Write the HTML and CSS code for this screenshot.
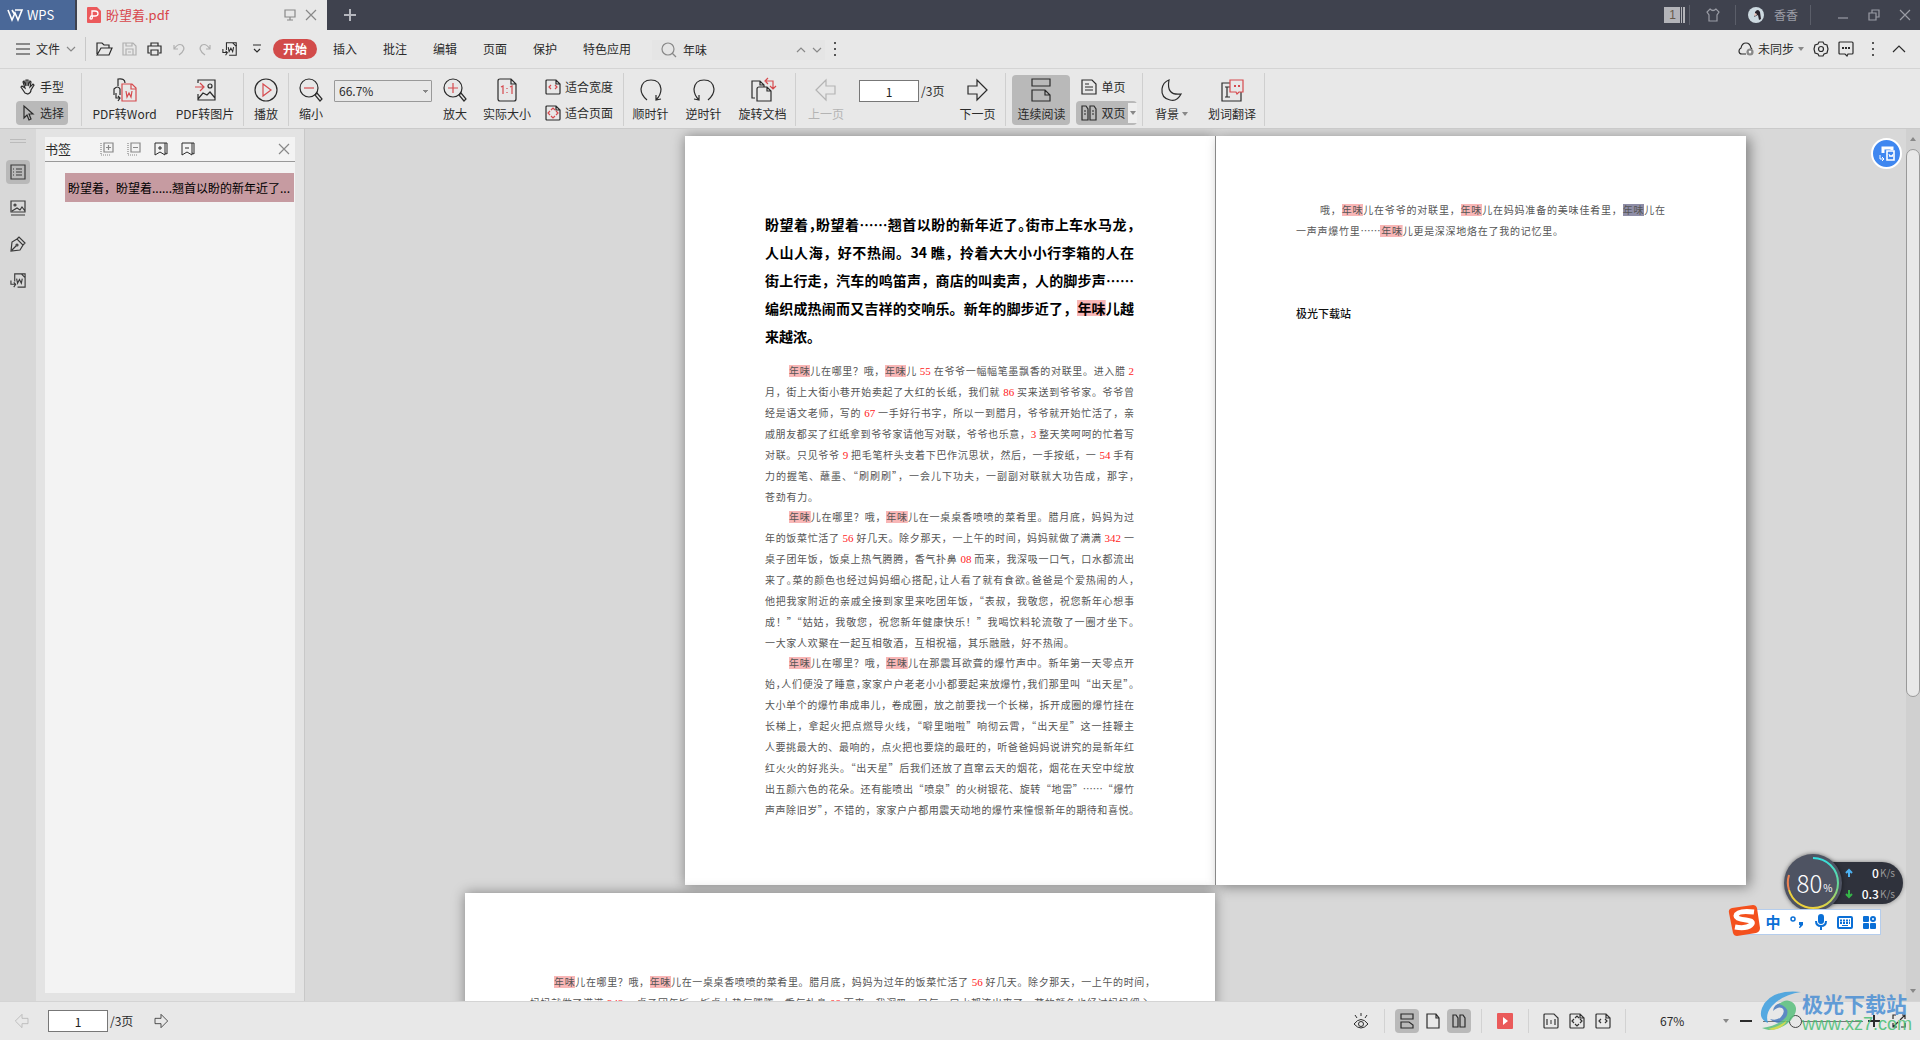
FILE: index.html
```html
<!DOCTYPE html>
<html lang="zh-CN">
<head>
<meta charset="utf-8">
<title>盼望着.pdf - WPS</title>
<link rel="stylesheet" href="styles.css">
</head>
<body>
<svg class="sprite" aria-hidden="true">
  <symbol id="down" viewBox="0 0 10 10"><path d="M1 3l4 4 4-4"/></symbol>
  <symbol id="up" viewBox="0 0 10 10"><path d="M1 7l4-4 4 4"/></symbol>
  <symbol id="close" viewBox="0 0 12 12"><path d="M1 1l10 10M11 1L1 11"/></symbol>
  <symbol id="left" viewBox="0 0 24 24"><path d="M2 12L12 2v6h9v8h-9v6z"/></symbol>
  <symbol id="right" viewBox="0 0 24 24"><path d="M22 12L12 2v6H3v8h9v6z"/></symbol>
  <symbol id="export" viewBox="0 0 18 18"><path d="M5 10V2h11v14H8M12 2l4 4M1 9v4h5M4 11l2 2-2 3M7 7l1 5 2-4 2 4 1-5"/></symbol>
  <symbol id="one" viewBox="0 0 20 24"><path d="M1 3q0-2 2-2h11l5 5v15q0 2-2 2H3q-2 0-2-2zM14 1v5h5"/><path class="red" d="M4 9l2-1v8M13 9l2-1v8M10 10v1M10 14v1"/></symbol>
  <symbol id="fitw" viewBox="0 0 16 16"><path d="M1 2q0-1 1-1h9l4 4v9q0 1-1 1H2q-1 0-1-1zM11 1v4h4"/><path class="red" d="M6 6L4 8l2 2M10 6l2 2-2 2"/></symbol>
  <symbol id="fitp" viewBox="0 0 16 16"><path d="M1 2q0-1 1-1h9l4 4v9q0 1-1 1H2q-1 0-1-1zM11 1v4h4"/><path class="red" d="M6 5l2-2 2 2M6 11l2 2 2-2M5 6L3 8l2 2M11 6l2 2-2 2"/></symbol>
  <symbol id="cont" viewBox="0 0 20 24"><path d="M1 1h18v7H1zM1 23V12h13l5 5v6zM14 12v5h5"/></symbol>
  <symbol id="two" viewBox="0 0 16 16"><path d="M1 1h4l2 3v11H1zM9 1h4l2 3v11H9zM3 6h2M3 9h2M11 6h2M11 9h2"/></symbol>
  <symbol id="lens" viewBox="0 0 24 24"><circle cx="10" cy="10" r="9"/><path d="M16 17l2-2 5 6-2 2z"/></symbol>
  <symbol id="mark" viewBox="0 0 14 14"><path d="M1 1h10v12l-5-3-5 3zM11 1h2v11l-2-1"/></symbol>
</svg>

<header class="titlebar">
  <button class="wps"><svg class="i" width="16" height="12" viewBox="0 0 16 12"><path d="M1 1l4 10 3-7 3 7 4-10H8M5 1l3 5" stroke-width="1.6"/></svg>WPS</button>
  <div class="doctab">
    <svg width="14" height="16" viewBox="0 0 14 16"><path d="M1 0h9l4 4v11q0 1-1 1H1q-1 0-1-1V1q0-1 1-1z" fill="#ec5a5c"/><path d="M5 9V4h3q3 0 3 2.500T8 9H4q-2 3 0 3 2 0 1-3" fill="none" stroke="#fff" stroke-width="1.300"/></svg>
    <span class="docname">盼望着.pdf</span>
    <svg class="i dim" width="12" height="12" viewBox="0 0 12 12"><path d="M1 1h10v7H1zM6 8v3M3 11h6"/></svg>
    <button aria-label="关闭标签"><svg class="i dim" width="12" height="12"><use href="#close"/></svg></button>
  </div>
  <button class="newtab" aria-label="新建"><svg class="i" width="12" height="12" viewBox="0 0 12 12"><path d="M6 0v12M0 6h12" stroke-width="2"/></svg></button>
  <div class="winarea">
    <span class="count">1</span>
    <span class="tsep"></span>
    <button class="shirt" aria-label="皮肤"><svg class="i" width="14" height="14" viewBox="0 0 14 14"><path d="M4 1q3 3 6 0l3 3-2 3v6H3V7L1 4z"/></svg></button>
    <span class="tsep"></span>
    <button class="user"><svg width="16" height="16" viewBox="0 0 16 16"><circle cx="8" cy="8" r="8" fill="#cdd9e0"/><path d="M7 5q3-4 5 0l1 7-2 1-1-5-4 2 1-2z" fill="#29232c"/><path d="M7 6l2 1-1 2-2-1z" fill="#e8c4bb"/></svg>香香</button>
    <span class="tsep"></span>
    <button class="win" aria-label="最小化"><svg class="i" width="12" height="12" viewBox="0 0 12 12"><path d="M1 9h10"/></svg></button>
    <button class="win" aria-label="还原"><svg class="i" width="12" height="12" viewBox="0 0 12 12"><path d="M1 4h7v7H1zM4 4V1h7v7H8"/></svg></button>
    <button class="win" aria-label="关闭"><svg class="i" width="12" height="12"><use href="#close"/></svg></button>
  </div>
</header>

<nav class="menubar">
  <button class="file"><svg class="i" width="14" height="12" viewBox="0 0 14 12"><path d="M0 1h14M0 6h14M0 11h14"/></svg>文件<svg class="i dim" width="10" height="10"><use href="#down"/></svg></button>
  <span class="msep"></span>
  <div class="quick">
    <button aria-label="打开"><svg class="i" width="17" height="14" viewBox="0 0 17 14"><path d="M1 12V1h5l2 2h5v3M1 13l4-7h11l-3 7z"/></svg></button>
    <button aria-label="保存"><svg class="i faint" width="15" height="14" viewBox="0 0 15 14"><path d="M1 1h10l3 3v9H1zM4 1v3h6V1M4 13V7h7v6M6 10h3"/></svg></button>
    <button aria-label="打印"><svg class="i" width="15" height="14" viewBox="0 0 15 14"><path d="M4 4V1h7v3M3 11H1V4h13v7h-2M4 8h7v5H4z"/></svg></button>
    <button aria-label="撤销"><svg class="i faint" width="13" height="14" viewBox="0 0 13 14"><path d="M1 3v4h4M1 7q4-6 8-4 5 4-3 10"/></svg></button>
    <button aria-label="重做"><svg class="i faint" width="13" height="14" viewBox="0 0 13 14"><path d="M12 3v4H8M12 7Q8 1 4 3q-5 4 3 10"/></svg></button>
    <button aria-label="转换为Word"><svg class="i" width="16" height="16"><use href="#export"/></svg></button>
    <button aria-label="自定义"><svg class="i" width="10" height="10" viewBox="0 0 10 10"><path d="M1 1h8M2 5l3 3 3-3"/></svg></button>
  </div>
  <div class="tabs">
    <button class="active">开始</button><button>插入</button><button>批注</button><button>编辑</button><button>页面</button><button>保护</button><button>特色应用</button>
  </div>
  <div class="search">
    <svg class="i dim" width="16" height="16" viewBox="0 0 16 16"><circle cx="7" cy="7" r="6"/><path d="M11 11l4 4"/></svg>
    <input type="text" value="年味" aria-label="查找">
    <button aria-label="上一个"><svg class="i dim" width="10" height="10"><use href="#up"/></svg></button>
    <button aria-label="下一个"><svg class="i dim" width="10" height="10"><use href="#down"/></svg></button>
  </div>
  <button class="dots" aria-label="更多"><i></i><i></i><i></i></button>
  <div class="menuright">
    <button class="sync"><svg class="i" width="16" height="14" viewBox="0 0 16 14"><path d="M8 12H4q-3 0-3-3 0-2 2-3Q4 1 8 1t5 5l1 1"/><circle cx="12" cy="10" r="3" fill="#888" stroke="#888"/><path d="M11 9l2 2M13 9l-2 2" stroke="#fff"/></svg>未同步<span class="tri"></span></button>
    <button aria-label="设置"><svg class="i" width="16" height="16" viewBox="0 0 16 16"><path d="M6 1h4l1 2 3 1 1 4-1 4-3 1-1 2H6l-1-2-3-1-1-4 1-4 3-1z"/><circle cx="8" cy="8" r="2.500"/></svg></button>
    <button aria-label="反馈"><svg class="i" width="16" height="16" viewBox="0 0 16 16"><path d="M1 2q0-1 1-1h12q1 0 1 1v10q0 1-1 1h-4l-1 2-2-2H2q-1 0-1-1z"/><path d="M4 7h2M7 7h2M10 7h2" stroke-width="2"/></svg></button>
    <button class="dots" aria-label="更多选项"><i></i><i></i><i></i></button>
    <button aria-label="收起功能区"><svg class="i" width="14" height="14" viewBox="0 0 14 14"><path d="M1 10l6-6 6 6"/></svg></button>
  </div>
</nav>

<section class="toolbar">
  <div class="pair mode">
    <button><svg class="i" width="16" height="16" viewBox="0 0 16 16"><path d="M5 14L1 8l1-1 3 2-2-6 1-1 2 5V1h2v6l2-5 1 1-1 5 3-3 1 1-3 5q0 3-3 4z"/></svg>手型</button>
    <button class="on"><svg class="i" width="16" height="16" viewBox="0 0 16 16"><path d="M4 1v12l3-3 2 5 2-1-2-5h4z"/></svg>选择</button>
  </div>
  <span class="sep"></span>
  <button class="tool w84"><svg class="i" width="24" height="24" viewBox="0 0 24 24"><path d="M5 8V1q7-1 7 4M1 17v-6q4-4 6 0v6M3 15v5h4M5 18l2 2-2 3"/><path class="red" d="M9 6h10l4 4v13H9zM18 6v5h5M13 13l1 6 2-4 2 4 1-6"/></svg>PDF转Word</button>
  <button class="tool w76"><svg class="i" width="24" height="24" viewBox="0 0 24 24"><path d="M5 5V2h17v20H5v-6M5 21l5-6 4 2 3-3 5 6"/><circle cx="17" cy="8" r="2"/><path class="red" d="M2 9h8M7 5l4 4-4 4"/></svg>PDF转图片</button>
  <span class="sep"></span>
  <button class="tool w44"><svg class="i" width="24" height="24" viewBox="0 0 24 24"><circle cx="12" cy="12" r="11"/><path class="red" d="M9 6l8 6-8 6z"/></svg>播放</button>
  <span class="sep"></span>
  <button class="tool w44"><svg class="i" width="24" height="24" viewBox="0 0 24 24"><use href="#lens" width="24" height="24"/><path class="red" d="M5 10h10"/></svg>缩小</button>
  <select class="zoomsel" aria-label="缩放比例"><option>66.7%</option></select>
  <button class="tool w44"><svg class="i" width="24" height="24" viewBox="0 0 24 24"><use href="#lens" width="24" height="24"/><path class="red" d="M5 10h10M10 5v10"/></svg>放大</button>
  <button class="tool w60"><svg class="i" width="20" height="24"><use href="#one"/></svg>实际大小</button>
  <div class="pair fit">
    <button><svg class="i" width="16" height="16"><use href="#fitw"/></svg>适合宽度</button>
    <button><svg class="i" width="16" height="16"><use href="#fitp"/></svg>适合页面</button>
  </div>
  <span class="sep"></span>
  <button class="tool w52"><svg class="i" width="24" height="24" viewBox="0 0 24 24"><path d="M8 22Q2 17 2 11 3 2 12 2t10 9q0 6-5 11M22 21l-5 1 0-5"/></svg>顺时针</button>
  <button class="tool w52"><svg class="i" width="24" height="24" viewBox="0 0 24 24"><path d="M16 22q6-5 6-11-1-9-10-9T2 11q0 6 5 11M2 21l5 1V17"/></svg>逆时针</button>
  <button class="tool w64"><svg class="i" width="26" height="24" viewBox="0 0 26 24"><path d="M5 20H2V3h8l4 4v2M10 3v4h4M7 23V11q0-2 2-2h8l4 4v10zM17 9v4h4"/><path class="red" d="M16 3h7v7M18 0l-3 3 3 3M20 8l3 3 3-3"/></svg>旋转文档</button>
  <span class="sep"></span>
  <button class="tool w56 off" disabled><svg class="i" width="24" height="24"><use href="#left"/></svg>上一页</button>
  <div class="pageno"><input type="text" value="1" aria-label="页码"><span>/3页</span></div>
  <button class="tool w56"><svg class="i" width="24" height="24"><use href="#right"/></svg>下一页</button>
  <span class="sep"></span>
  <button class="tool w58 on"><svg class="i" width="20" height="24"><use href="#cont"/></svg>连续阅读</button>
  <div class="pair view">
    <button><svg class="i" width="16" height="16" viewBox="0 0 16 16"><path d="M1 1h10l4 4v10H1zM4 5h4M4 8h8M4 11h8"/></svg>单页</button>
    <button class="on"><svg class="i" width="16" height="16"><use href="#two"/></svg>双页<span class="drop"><span class="tri"></span></span></button>
  </div>
  <span class="sep"></span>
  <button class="tool w56"><svg class="i" width="24" height="24" viewBox="0 0 24 24"><path d="M10 2Q7 18 22 16 18 24 11 22 2 20 3 11 4 4 10 2z"/></svg><span class="lab">背景<span class="tri"></span></span></button>
  <button class="tool w64"><svg class="i" width="24" height="24" viewBox="0 0 24 24"><path d="M10 5H2v18h19v-9M5 9h5M5 19h5M7 9v10"/><path class="red" d="M10 2h13v12h-4l-2 2-1-2h-6z"/><path class="red" d="M14 8h2M18 8h2" stroke-width="2"/></svg>划词翻译</button>
  <span class="sep"></span>
</section>

<main class="work">
  <aside class="rail">
    <span class="grip"></span>
    <button class="on" aria-label="书签"><svg class="i" width="16" height="16" viewBox="0 0 16 16"><path d="M1 1h14v14H1zM6 5h6M6 8h6M6 11h6M3 5h1M3 8h1M3 11h1"/></svg></button>
    <button aria-label="缩略图"><svg class="i" width="16" height="16" viewBox="0 0 16 16"><path d="M1 1h14v11H1zM1 15h14M2 11l5-3 3 2 2-3 3 4"/><circle cx="5" cy="5" r="1"/></svg></button>
    <button aria-label="签名"><svg class="i" width="16" height="16" viewBox="0 0 16 16"><path d="M1 15l1-9 5-3 6 6-3 5zM7 3l2-2 6 6-2 2M2 14l4-4"/><circle cx="7" cy="9" r="1"/></svg></button>
    <button aria-label="转换"><svg class="i" width="17" height="17"><use href="#export"/></svg></button>
  </aside>
  <section class="side">
    <div class="panel">
      <div class="panelhead">
        <h2>书签</h2>
        <button aria-label="展开"><svg class="i dim" width="14" height="14" viewBox="0 0 14 14"><path d="M4 1h9v9H4zM8.500 3v5M6 5.500h5"/><path d="M1 1v12h9" stroke-dasharray="1 1"/></svg></button>
        <button aria-label="折叠"><svg class="i dim" width="14" height="14" viewBox="0 0 14 14"><path d="M4 1h9v9H4zM6 5.500h5"/><path d="M1 1v12h9" stroke-dasharray="1 1"/></svg></button>
        <button aria-label="添加书签"><svg class="i thin" width="14" height="14" viewBox="0 0 14 14"><use href="#mark" width="14" height="14"/><path d="M4 6h4M6 4v4"/></svg></button>
        <button aria-label="删除书签"><svg class="i thin" width="14" height="14" viewBox="0 0 14 14"><use href="#mark" width="14" height="14"/><path d="M4 6h4"/></svg></button>
        <button class="x" aria-label="关闭面板"><svg class="i dim" width="12" height="12"><use href="#close"/></svg></button>
      </div>
      <a class="entry" href="#p1">盼望着，盼望着......翘首以盼的新年近了...</a>
    </div>
  </section>
  <div class="viewer">
    <div class="sheets">
      <article class="page" id="p1">
        <h1>
          <span class="l">盼望着<b>，</b>盼望着……翘首以盼的新年近了<b>。</b>街市上车水马龙<b>，</b></span>
          <span class="l">人山人海，好不热闹。34 瞧，拎着大大小小行李箱的人在</span>
          <span class="l">街上行走，汽车的鸣笛声，商店的叫卖声，人的脚步声……</span>
          <span class="l">编织成热闹而又吉祥的交响乐。新年的脚步近了，<mark>年味</mark>儿越</span>
          <span class="l end">来越浓。</span>
        </h1>
        <p>
          <span class="l in"><mark>年味</mark>儿在哪里？哦，<mark>年味</mark>儿 <em>55</em> 在爷爷一幅幅笔墨飘香的对联里。进入腊 <em>2</em></span>
          <span class="l">月，街上大街小巷开始卖起了大红的长纸，我们就 <em>86</em> 买来送到爷爷家。爷爷曾</span>
          <span class="l">经是语文老师，写的 <em>67</em> 一手好行书字，所以一到腊月，爷爷就开始忙活了，亲</span>
          <span class="l">戚朋友都买了红纸拿到爷爷家请他写对联，爷爷也乐意，<em>3</em> 整天笑呵呵的忙着写</span>
          <span class="l">对联。只见爷爷 <em>9</em> 把毛笔杆头支着下巴作沉思状，然后，一手按纸，一 <em>54</em> 手有</span>
          <span class="l">力的握笔、蘸墨、“刷刷刷”，一会儿下功夫，一副副对联就大功告成，那字<b>，</b></span>
          <span class="l s1">苍劲有力<b>。</b></span>
        </p>
        <p>
          <span class="l in"><mark>年味</mark>儿在哪里？哦，<mark>年味</mark>儿在一桌桌香喷喷的菜肴里。腊月底，妈妈为过</span>
          <span class="l">年的饭菜忙活了 <em>56</em> 好几天。除夕那天，一上午的时间，妈妈就做了满满 <em>342</em> 一</span>
          <span class="l">桌子团年饭，饭桌上热气腾腾，香气扑鼻 <em>08</em> 而来，我深吸一口气，口水都流出</span>
          <span class="l">来了<b>。</b>菜的颜色也经过妈妈细心搭配<b>，</b>让人看了就有食欲<b>。</b>爸爸是个爱热闹的人<b>，</b></span>
          <span class="l">他把我家附近的亲戚全接到家里来吃团年饭，“表叔，我敬您，祝您新年心想事</span>
          <span class="l">成！”“姑姑，我敬您，祝您新年健康快乐！”我喝饮料轮流敬了一圈才坐下<b>。</b></span>
          <span class="l s2">一大家人欢聚在一起互相敬酒，互相祝福，其乐融融，好不热闹<b>。</b></span>
        </p>
        <p>
          <span class="l in"><mark>年味</mark>儿在哪里？哦，<mark>年味</mark>儿在那震耳欲聋的爆竹声中。新年第一天零点开</span>
          <span class="l">始<b>，</b>人们便没了睡意<b>，</b>家家户户老老小小都要起来放爆竹<b>，</b>我们那里叫“出天星”<b>。</b></span>
          <span class="l">大小单个的爆竹串成串儿，卷成圈，放之前要找一个长梯，拆开成圈的爆竹挂在</span>
          <span class="l">长梯上，拿起火把点燃导火线，“噼里啪啦”响彻云霄，“出天星”这一挂鞭主</span>
          <span class="l">人要挑最大的、最响的，点火把也要烧的最旺的，听爸爸妈妈说讲究的是新年红</span>
          <span class="l">红火火的好兆头。“出天星”后我们还放了直窜云天的烟花，烟花在天空中绽放</span>
          <span class="l">出五颜六色的花朵。还有能喷出“喷泉”的火树银花、旋转“地雷”……“爆竹</span>
          <span class="l">声声除旧岁”，不错的，家家户户都用震天动地的爆竹来憧憬新年的期待和喜悦<b>。</b></span>
        </p>
      </article>
      <article class="page second">
        <p>
          <span class="l in">哦，<mark>年味</mark>儿在爷爷的对联里，<mark>年味</mark>儿在妈妈准备的美味佳肴里，<mark class="cur">年味</mark>儿在</span>
          <span class="l s3">一声声爆竹里……<mark>年味</mark>儿更是深深地烙在了我的记忆里<b>。</b></span>
        </p>
        <p class="sign">极光下载站</p>
      </article>
      <article class="page wide">
        <p>
          <span class="l in"><mark>年味</mark>儿在哪里？哦，<mark>年味</mark>儿在一桌桌香喷喷的菜肴里。腊月底，妈妈为过年的饭菜忙活了 <em>56</em> 好几天。除夕那天，一上午的时间<b>，</b></span>
          <span class="l">妈妈就做了满满 <em>342</em> 一桌子团年饭，饭桌上热气腾腾，香气扑鼻 <em>08</em> 而来，我深吸一口气，口水都流出来了。菜的颜色也经过妈妈细心</span>
        </p>
      </article>
    </div>
    <div class="scroll"><span class="tri upw"></span><span class="thumb"></span><span class="tri"></span></div>
    <button class="float" aria-label="PDF转Word"><svg width="18" height="18" viewBox="0 0 18 18" fill="none" stroke="#fff"><path d="M5 8V3h9v2" stroke-width="3"/><path d="M9 6h7v9H9z" stroke-width="1.600"/><path d="M11 9l1 3 1-2 1 2 1-3M2 10v4h4M4 12l2 2-2 2"/></svg></button>
  </div>
</main>

<footer class="status">
  <button class="off" aria-label="上一页"><svg class="i" width="16" height="16"><use href="#left"/></svg></button>
  <div class="pageno"><input type="text" value="1" aria-label="当前页"><span>/3页</span></div>
  <button class="next" aria-label="下一页"><svg class="i" width="16" height="16"><use href="#right"/></svg></button>
  <div class="statright">
    <button class="sb eye" aria-label="护眼"><svg class="i thin" width="18" height="18" viewBox="0 0 18 18"><path d="M2 12q7-9 14 0-7 8-14 0zM9 1v3M3 3l2 3M15 3l-2 3"/><circle cx="9" cy="12" r="2.500"/></svg></button>
    <span class="ssep"></span>
    <button class="sb on" aria-label="连续阅读"><svg class="i" width="16" height="16" viewBox="0 0 16 16"><path d="M2 1h12v5H2zM2 15V9h8l4 3v3z"/></svg></button>
    <button class="sb" aria-label="单页"><svg class="i" width="14" height="16" viewBox="0 0 14 16"><path d="M1 1h9l3 4v10H1zM10 1v4h3"/></svg></button>
    <button class="sb on" aria-label="双页"><svg class="i" width="16" height="16" viewBox="0 0 16 16"><path d="M2 2h3l2 3v9H2zM9 2h3l2 3v9H9z"/></svg></button>
    <span class="ssep"></span>
    <button class="sb play" aria-label="播放"><svg width="16" height="16" viewBox="0 0 16 16"><rect width="16" height="16" rx="1" fill="#ea5a5a"/><path d="M6 4l5 4-5 4z" fill="#fff"/></svg></button>
    <span class="ssep"></span>
    <div class="fits">
      <button class="sb mono" aria-label="实际大小"><svg class="i" width="16" height="16" viewBox="0 0 16 16"><path d="M1 2q0-1 1-1h9l4 4v9q0 1-1 1H2q-1 0-1-1zM4 6v6M12 6v6M7 8h2M7 10h2"/></svg></button>
      <button class="sb mono" aria-label="适合页面"><svg class="i" width="16" height="16"><use href="#fitp"/></svg></button>
      <button class="sb mono" aria-label="适合宽度"><svg class="i" width="16" height="16"><use href="#fitw"/></svg></button>
    </div>
    <span class="ssep"></span>
    <button class="pct">67%<span class="tri"></span></button>
    <button class="pm" aria-label="缩小"><svg class="i" width="12" height="12" viewBox="0 0 12 12"><path d="M0 6h12" stroke-width="2"/></svg></button>
    <input class="slider" type="range" min="0" max="100" value="30" aria-label="缩放">
    <button class="pm" aria-label="放大"><svg class="i" width="12" height="12" viewBox="0 0 12 12"><path d="M0 6h12M6 0v12" stroke-width="2"/></svg></button>
    <button class="full" aria-label="全屏"><svg class="i" width="14" height="14" viewBox="0 0 14 14"><path d="M1 5V1h3M10 1h3v4M13 9v4h-4M5 13H1V9M8 6l5-5M1 13l5-5"/></svg></button>
  </div>
</footer>

<div class="watermark">
  <svg width="44" height="40" viewBox="0 0 44 40"><path d="M43 2Q12-1 4 18q-4 11 6 15-3-9 4-17Q24 5 43 2z" fill="#3c9fe0"/><path d="M12 29q7 2 11-2 5-6 1-9-4-2-9 3 1-8 10-8 10 2 10 9-1 10-12 11-7 0-11-4z" fill="#4479be"/><path d="M21 14q7-6 13-2 7 5 2 14-8 13-25 14-5-1-7-2 18-3 24-11 5-9-7-13z" fill="#58bf7c"/><path d="M10 39q12-2 19-9-3 8-14 10z" fill="#cbd839"/></svg>
  <div><strong>极光下载站</strong><span>www.xz7.com</span></div>
</div>

<div class="meter">
  <div class="rates">
    <span><svg width="10" height="10" viewBox="0 0 10 10"><path d="M5 9V2M2 5l3-3 3 3" fill="none" stroke="#4db2f2" stroke-width="2"/></svg><b>0</b><small>K/s</small></span>
    <span><svg width="10" height="10" viewBox="0 0 10 10"><path d="M5 1v7M2 5l3 3 3-3" fill="none" stroke="#35b548" stroke-width="2"/></svg><b>0.3</b><small>K/s</small></span>
  </div>
  <div class="dial">
    <svg width="58" height="58" viewBox="0 0 58 58" fill="none" stroke-width="2"><defs><linearGradient id="g" x1="0" y1="0" x2="0" y2="1"><stop offset="0" stop-color="#35dfe0"/><stop offset=".6" stop-color="#6fd68c"/><stop offset="1" stop-color="#ecd23d"/></linearGradient></defs><path d="M29 4a25 25 0 0 1 0 50" stroke="url(#g)"/><path d="M29 54A25 25 0 0 1 5 36" stroke="#ecd23d"/><path d="M5 36A25 25 0 0 1 5 21" stroke="#ee8252"/></svg>
    <span>80<small>%</small></span>
  </div>
</div>

<div class="ime">
  <svg class="logo" width="32" height="32" viewBox="0 0 32 32"><path d="M4 3l21-3q3 0 4 3l3 20q0 4-4 5L9 31q-3 0-4-3L1 8q-1-4 3-5z" fill="#f4511e"/><path d="M26 7Q9 5 8 11q0 3 10 4 9 1 5 5-5 4-16 2" fill="none" stroke="#fff" stroke-width="5"/></svg>
  <button>中</button>
  <button aria-label="标点"><svg width="14" height="14" viewBox="0 0 14 14"><circle cx="3" cy="4" r="2" fill="none" stroke="#0a6fd6" stroke-width="1.500"/><path d="M9 7h4v3l-3 3H9l1-3H9z" fill="#0a6fd6"/></svg></button>
  <button aria-label="语音"><svg width="14" height="16" viewBox="0 0 14 16" fill="none" stroke="#0a6fd6" stroke-width="2"><path d="M2 7q0 5 5 5t5-5M7 12v4"/><rect x="5" y="1" width="4" height="8" rx="2" fill="#0a6fd6"/></svg></button>
  <button aria-label="键盘"><svg width="16" height="14" viewBox="0 0 16 14" fill="none" stroke="#0a6fd6" stroke-width="2"><rect x="1" y="2" width="14" height="11" rx="1"/><path d="M3 5.500h10M3 8h10" stroke-dasharray="2 1"/><path d="M5 10.500h6" stroke-width="1"/></svg></button>
  <button aria-label="工具箱"><svg width="14" height="14" viewBox="0 0 14 14" fill="#0a6fd6"><rect x="1" y="1" width="6" height="6" rx="1"/><rect x="1" y="8" width="6" height="6" rx="1"/><rect x="8" y="8" width="6" height="6" rx="1"/><circle cx="11" cy="4" r="2" fill="none" stroke="#0a6fd6" stroke-width="2"/></svg></button>
</div>
</body>
</html>
```
FILE: styles.css
```css
* { box-sizing: border-box; }
body {
  margin: 0;
  height: 100vh;
  display: flex;
  flex-direction: column;
  overflow: hidden;
  position: relative;
  font: 12px/16px "Noto Sans CJK SC", "Noto Sans", sans-serif;
  color: #2b2b2b;
  background: #e8e8e8;
}
button, input, select { font: inherit; color: inherit; margin: 0; padding: 0; }
button { border: 0; background: none; display: flex; align-items: center; justify-content: center; white-space: nowrap; flex: none; }
svg { flex: none; display: block; }
.sprite { position: absolute; width: 0; height: 0; }
.i { fill: none; stroke: currentColor; stroke-width: 1.2; overflow: visible; }
.thin { stroke-width: 1; }
.red { stroke: var(--accent, #d64a4e); }
.dim { color: #888; }
.faint { color: #b0b0b0; }
.off { color: #b4b4b4; }
.on { background: #b9b9b9; border-radius: 4px; }
.tri { width: 0; height: 0; border: 3px solid transparent; border-top: 4px solid #888; border-bottom: 0; }

/* Title bar */
.titlebar { display: flex; height: 30px; flex: none; background: #3f424e; color: #9a9ca5; }
.wps { width: 75px; gap: 4px; background: #4a6898; color: #fff; font-size: 13px; padding-right: 14px; }
.doctab { width: 250px; margin-left: 2px; padding: 0 10px; display: flex; align-items: center; gap: 9px; background: #e8e8e8; }
.docname { flex: 1; font-size: 13px; color: #d8464a; margin-left: -4px; }
.newtab { width: 46px; color: #b5b7be; }
.winarea { margin-left: auto; display: flex; align-items: center; }
.count { width: 21px; height: 16px; margin-right: 4px; padding-right: 4px; text-align: center; color: #665a4a; font-family: "Liberation Sans", sans-serif; background: linear-gradient(90deg, #b3b4b9 16px, #3f424e 16px 17px, #b3b4b9 17px 18px, #3f424e 18px 19px, #b3b4b9 19px); }
.tsep { width: 1px; height: 20px; background: #5b5e69; }
.shirt { width: 45px; }
.user { width: 74px; gap: 10px; }
.win { width: 31px; }
.tsep + .win { margin-left: 16px; }

/* Menu row */
.menubar { display: flex; align-items: center; height: 39px; flex: none; padding: 0 14px 1px 16px; border-bottom: 1px solid #d4d4d4; }
.file { gap: 6px; }
.msep { width: 1px; height: 24px; margin: 0 6px 0 9px; background: #c8c8c8; }
.quick { display: flex; }
.quick button { width: 25px; height: 24px; }
.quick button:nth-child(7) { width: 30px; }
.tabs { display: flex; margin-left: 1px; }
.tabs button { width: 50px; height: 20px; }
.tabs button:last-child { width: 74px; }
.tabs .active { width: 44px; margin-right: 3px; border-radius: 10px; background: #d24b4a; color: #fff; font-weight: 700; }
.search { display: flex; align-items: center; width: 173px; height: 20px; padding: 0 3px 0 9px; margin: 2px 0 0 8px; gap: 6px; background: #e5e5e5; }
.search input { border: 0; outline: 0; background: none; width: 106px; height: 18px; flex: 1; min-width: 0; }
.dots { width: 20px; flex-direction: column; gap: 4px; }
.dots i { width: 2px; height: 2px; background: #555; }
.menuright { margin-left: auto; display: flex; align-items: center; gap: 9px; }
.sync { gap: 4px; }

/* Tool row */
.toolbar { display: flex; align-items: flex-start; height: 59px; flex: none; padding: 6px 0 0 16px; position: relative; z-index: 2; }
.sep { width: 1px; height: 53px; margin-top: -2px; background: #cfcfcf; flex: none; }
.tool { flex-direction: column; height: 50px; gap: 4px; }
.tool .i { height: 24px; }
.w44 { width: 44px; }
.w52 { width: 53px; }
.w56 { width: 56px; }
.w58 { width: 58px; margin-left: 6px; }
.w60 { width: 60px; }
.w64 { width: 65px; }
.w76 { width: 76px; }
.w84 { width: 85px; }
.lab { display: flex; align-items: center; gap: 3px; }
.pair { display: flex; flex-direction: column; gap: 2px; }
.pair button { height: 24px; gap: 4px; }
.mode { width: 52px; margin-right: 13px; }
.fit { margin: 0 10px 0 8px; }
.view { width: 61px; margin: 0 5px 0 6px; }
.view button { justify-content: flex-start; padding-left: 5px; }
.drop { width: 10px; height: 20px; margin-left: -1px; background: #eee; display: flex; align-items: center; justify-content: center; }
.zoomsel { width: 98px; height: 22px; margin: 5px 1px 0; padding: 0 4px; border: 1px solid #999; border-radius: 1px; appearance: none; background: linear-gradient(#888, #888) 88px 9px / 5px 1px no-repeat, linear-gradient(#888, #888) 89px 10px / 3px 1px no-repeat, linear-gradient(#888, #888) 90px 11px / 1px 1px no-repeat, #e8e8e8; }
.pageno { display: flex; align-items: center; gap: 2px; }
.pageno input { width: 60px; height: 22px; text-align: center; border: 1px solid #777; background: #fff; color: #222; }
.toolbar .pageno { margin: 5px 5px 0 5px; }
.toolbar .off { margin-left: 2px; }

/* Work area */
.work { flex: 1; min-height: 0; display: flex; background: #d8d8d8; border-top: 1px solid #cacaca; border-bottom: 1px solid #d4d4d4; }
.rail { width: 36px; flex: none; display: flex; flex-direction: column; align-items: center; gap: 12px; padding-top: 10px; color: #3a3a3a; }
.rail button { width: 24px; height: 24px; }
.grip { width: 16px; height: 4px; margin-bottom: 5px; border: solid #bbb; border-width: 1px 0; }
.side { width: 269px; flex: none; display: flex; padding: 8px 9px; background: #e3e3e3; border-right: 1px solid #c8c8c8; }
.panel { flex: 1; background: #f3f3f3; }
.panelhead { display: flex; align-items: center; height: 25px; gap: 13px; padding-right: 5px; border-bottom: 1px solid #999; }
.panelhead h2 { margin: 0 16px 0 0; font-size: 13px; font-weight: 400; }
.panelhead .x { margin-left: auto; }
.entry { display: block; height: 29px; margin: 11px 1px 0 20px; padding-left: 3px; line-height: 29px; white-space: nowrap; overflow: hidden; color: #000; text-decoration: none; background: #c69ba1; }
.viewer { flex: 1; min-width: 0; position: relative; display: flex; overflow: hidden; }
.sheets { flex: 1; display: grid; grid-template-columns: max-content max-content; justify-content: center; align-content: start; gap: 8px 1px; padding-top: 7px; }
.scroll { width: 14px; flex: none; display: flex; flex-direction: column; align-items: center; gap: 8px; padding: 8px 0; background: #d0d0d0; }
.thumb { width: 14px; height: 64%; margin-bottom: auto; border: 1px solid #999; border-radius: 7px; background: #e8e8e8; }
.upw { transform: rotate(180deg); }
.float { position: absolute; right: 18px; top: 9px; width: 31px; height: 31px; border: 2px solid #fff; border-radius: 50%; background: #3f87f0; }

/* Paper */
.page { width: 530px; height: 749px; padding: 74px 81px 74px 80px; background: #fff; box-shadow: 0 0 12px #0006; justify-self: end; }
.page.second { padding-top: 63px; box-shadow: -1px 0 #888, 4px 2px 12px #0006; justify-self: start; }
.page.wide { width: 750px; height: 530px; padding: 78px 65px; }
.page h1 { margin: 0 0 10px; font-size: 14px; line-height: 28px; font-weight: 700; color: #000; }
.page p { margin: 0 0 -1px; font-size: 10px; line-height: 21px; color: #555; }
.l { display: block; white-space: nowrap; text-align: justify; text-align-last: justify; }
.l b { font-weight: inherit; font-feature-settings: "halt"; }
.l em { font: 11px/1 "Liberation Serif", serif; color: #f22; }
.in { padding-left: 24px; }
.end { text-align-last: left; }
.s1 { width: 48px; }
.s2 { width: 304px; }
.s3 { width: 262px; }
mark { color: inherit; background: linear-gradient(#f8b6b6, #f8b6b6) center / 100% 80% no-repeat; }
.cur { background: linear-gradient(#8e8da6, #8e8da6) center / 100% 80% no-repeat; }
.page .sign { margin-top: 63px; font-size: 11px; font-weight: 500; color: #111; }

/* Status bar */
.status { display: flex; align-items: center; height: 38px; flex: none; padding: 0 14px; }
.status .pageno { margin: 0 20px 0 18px; }
.statright { margin-left: auto; display: flex; align-items: center; }
.sb { width: 24px; height: 24px; margin: 0 1px; }
.eye { margin-right: 2px; }
.ssep { width: 1px; height: 24px; margin: 0 9px; background: #d2d2d2; }
.play { margin: 0 2px; }
.fits { display: flex; }
.mono { --accent: #333; color: #333; }
.pct { width: 78px; margin: 0 11px 0 16px; justify-content: space-between; padding-left: 9px; }
.pm { width: 12px; }
.slider { width: 100px; height: 16px; margin: 0 5px 0 11px; appearance: none; background: linear-gradient(#777, #777) center / 100% 1px no-repeat; }
.slider::-webkit-slider-thumb { appearance: none; width: 13px; height: 13px; border: 1px solid #444; border-radius: 50%; background: #e8e8e8; }
.full { margin-left: 12px; }

/* Floating desktop widgets */
.watermark { position: absolute; right: 8px; bottom: 8px; display: flex; opacity: .85; z-index: 3; pointer-events: none; }
.watermark div { display: flex; flex-direction: column; }
.watermark strong { font-size: 21px; line-height: 26px; color: #4a8fd4; }
.watermark span { font: 18px/16px "Liberation Sans", sans-serif; color: #49bf74; }
.meter { position: absolute; right: 17px; bottom: 128px; width: 119px; height: 58px; display: flex; align-items: center; justify-content: flex-end; }
.rates { width: 84px; height: 42px; padding-right: 8px; border-radius: 0 21px 21px 0; background: #2f323c; color: #fff; display: flex; flex-direction: column; box-shadow: 0 0 4px #0006; }
.rates span { flex: 1; display: flex; align-items: center; }
.rates svg { margin: 0 auto 0 25px; }
.rates b { font-weight: 500; }
.rates small { font-size: 10px; color: #999; margin-left: 1px; }
.dial { position: absolute; left: 0; top: 0; width: 58px; height: 58px; border-radius: 50%; background: #4e5362; box-shadow: 0 0 4px #0008; color: #fff; }
.dial > span { position: absolute; inset: 0; display: flex; align-items: center; justify-content: center; font: 300 24px/50px "Noto Sans CJK SC", sans-serif; padding-left: 3px; }
.dial small { font-size: 10px; font-weight: 400; margin: 10px 0 0 1px; }
.ime { position: absolute; right: 39px; bottom: 105px; height: 26px; width: 146px; padding: 0 1px 0 27px; display: flex; align-items: center; justify-content: space-between; background: #fff; border: 1px solid #b5cdec; }
.ime button { width: 20px; font-size: 15px; font-weight: 700; color: #0a6fd6; }
.logo { position: absolute; left: -8px; top: -5px; }
```
